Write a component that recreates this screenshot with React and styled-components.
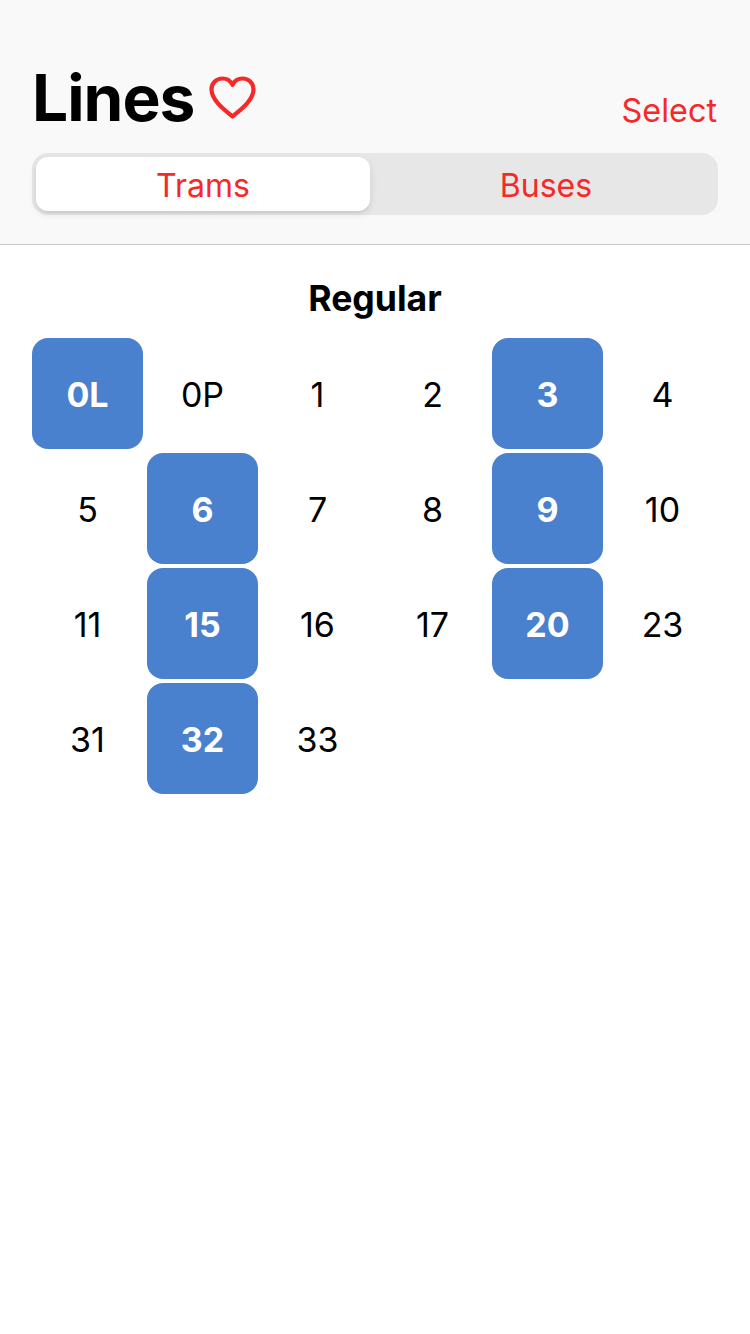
import React from 'react';
import styled, { createGlobalStyle } from 'styled-components';

const GlobalStyle = createGlobalStyle`
	html, body {
		margin: 0;
		padding: 0;
		background: #fff;
		font-family: Inter, "Liberation Sans", sans-serif;
	}
	* {
		box-sizing: border-box;
	}
`;

const Page = styled.div`
	width: 750px;
	height: 1334px;
	background: #fff;
	overflow: hidden;
`;

const Header = styled.header`
	height: 245px;
	padding: 44px 32px 0;
	background: #f9f9f9;
	border-bottom: 1px solid #c8c8c8;
`;

const TitleRow = styled.div`
	display: flex;
	align-items: flex-end;
	justify-content: space-between;
	height: 93px;
	margin-bottom: 16px;
`;

const TitleGroup = styled.div`
	display: flex;
	align-items: center;
	gap: 15px;
`;

const Title = styled.h1`
	margin: 0;
	font-size: 64px;
	line-height: 78px;
	font-weight: 700;
	letter-spacing: -1px;
	color: #000;
`;

const HeartIcon = styled.svg`
	width: 47px;
	height: 43px;
	margin-top: -1px;
	fill: none;
	stroke: #f62828;
	stroke-width: 4.2;
	stroke-linejoin: round;
`;

const SelectLink = styled.a`
	margin-right: 1px;
	padding-bottom: 6px;
	font-size: 32.4px;
	line-height: 41px;
	color: #f62828;
`;

const Segments = styled.div`
	display: flex;
	width: 686px;
	height: 62px;
	background: #e7e7e7;
	border-radius: 16px;
`;

const Segment = styled.div`
	display: flex;
	flex: 1;
	align-items: center;
	justify-content: center;
	margin: 4px 5px 4px 4px;
	padding-top: 2px;
	border-radius: 12px;
	font-size: 32px;
	color: #f62828;
	background: ${props => (props.$active ? '#fff' : 'transparent')};
	box-shadow: ${props => (props.$active ? '0 3px 8px rgba(0, 0, 0, 0.1), 0 2px 1px rgba(0, 0, 0, 0.04)' : 'none')};
`;

const Content = styled.main`
	padding: 32px 32px 0;
`;

const SectionTitle = styled.h2`
	margin: 0 0 18px;
	font-size: 35.6px;
	line-height: 43px;
	font-weight: 700;
	text-align: center;
	color: #000;
`;

const LineGrid = styled.div`
	display: grid;
	grid-template-columns: repeat(6, 111px);
	grid-auto-rows: 111px;
	gap: 4px;
`;

const Line = styled.div`
	display: flex;
	align-items: center;
	justify-content: center;
	padding-top: 1px;
	border-radius: 16px;
	font-size: 34px;
	font-weight: ${props => (props.$selected ? 700 : 400)};
	color: ${props => (props.$selected ? '#fff' : '#000')};
	background: ${props => (props.$selected ? '#4a81ce' : 'transparent')};
`;

const lines = [
	['0L', true], ['0P'], ['1'], ['2'], ['3', true], ['4'],
	['5'], ['6', true], ['7'], ['8'], ['9', true], ['10'],
	['11'], ['15', true], ['16'], ['17'], ['20', true], ['23'],
	['31'], ['32', true], ['33']
];

const App = () => (
	<Page>
		<GlobalStyle />
		<Header>
			<TitleRow>
				<TitleGroup>
					<Title>Lines</Title>
					<HeartIcon viewBox='0 0 47 43'>
						<path d='M23.5 40.5C18 35.5 2.5 25 2.5 13.5C2.5 7 7.5 2.5 13.5 2.5C17.8 2.5 21.6 5 23.5 8.8C25.4 5 29.2 2.5 33.5 2.5C39.5 2.5 44.5 7 44.5 13.5C44.5 25 29 35.5 23.5 40.5Z' />
					</HeartIcon>
				</TitleGroup>
				<SelectLink>Select</SelectLink>
			</TitleRow>
			<Segments>
				<Segment $active>Trams</Segment>
				<Segment>Buses</Segment>
			</Segments>
		</Header>
		<Content>
			<SectionTitle>Regular</SectionTitle>
			<LineGrid>
				{lines.map(([name, selected]) => (
					<Line key={name} $selected={selected}>
						{name}
					</Line>
				))}
			</LineGrid>
		</Content>
	</Page>
);

export default App;
